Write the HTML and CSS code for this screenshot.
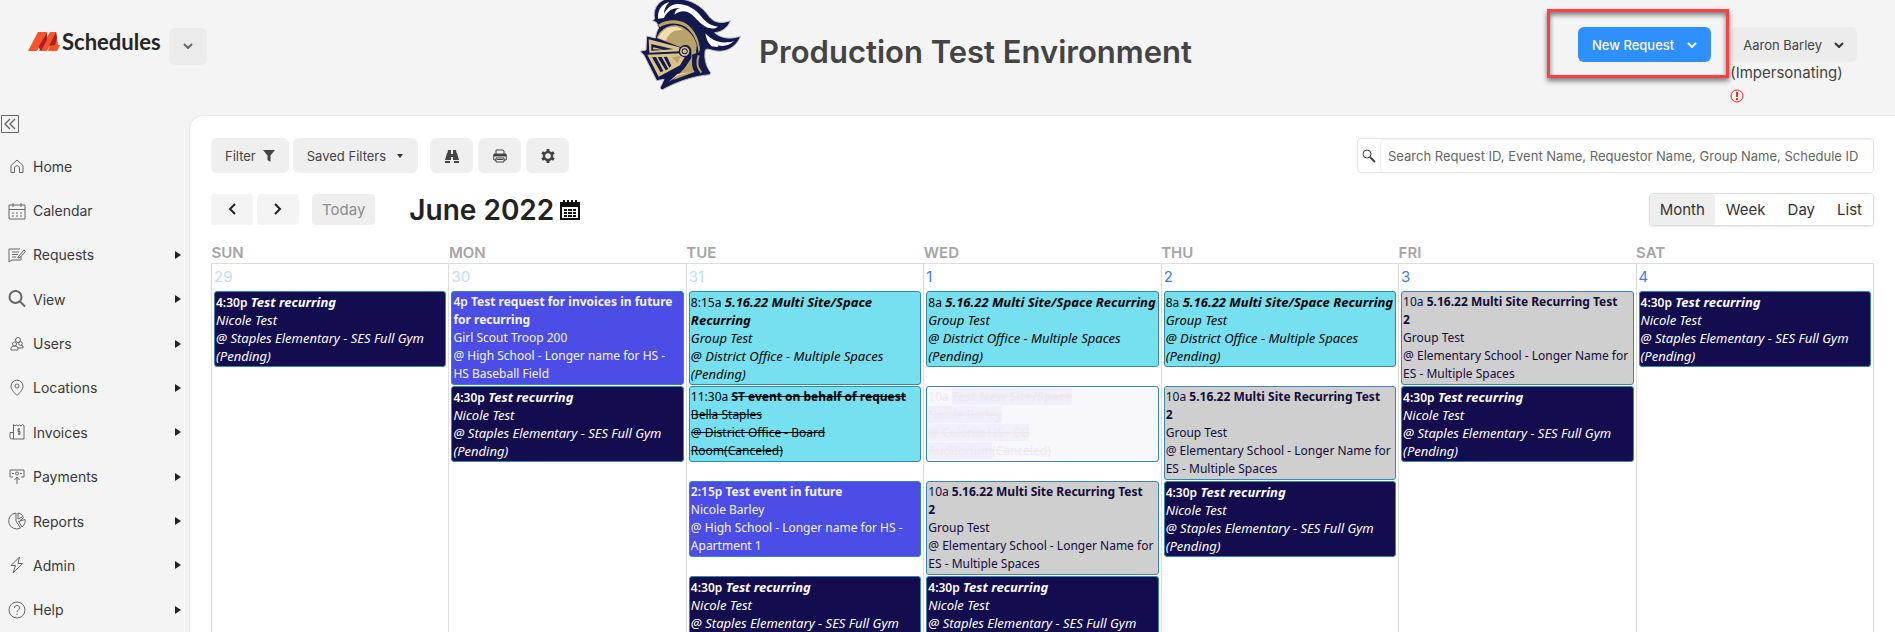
FILE: index.html
```html
<!DOCTYPE html>
<html lang="en">
<head>
    <meta charset="UTF-8">
    <meta name="viewport" content="width=device-width, initial-scale=1.0">
    <title>Schedules</title>
    <link rel="stylesheet" href="styles.css">
</head>
<body>

<header class="header">
    <div class="brand">
        <svg class="brand-mark" viewBox="0 0 32 19" aria-hidden="true">
            <path fill="#f4562a" d="M10 0h9L9 19H0zM22 0h6l2 13h2l-3 6h-9l2-6-3 6h-8z"/>
            <path fill="#b01e23" d="M19 0v8l-6 11-2-3V14zM28 0l1 6-2 7-6 1z"/>
        </svg>
        <span class="brand-name">Schedules</span>
        <button class="btn brand-menu" aria-label="Switch product">
            <svg width="10" height="6" viewBox="0 0 10 6"><path d="M1 1l4 4 4-4" fill="none" stroke="#666" stroke-width="2"/></svg>
        </button>
    </div>

    <div class="site-title">
        <svg class="knight" viewBox="0 0 330 282" aria-hidden="true">
            <path fill="#14194c" stroke="#c4c4c8" stroke-width="3" d="M62 68 50 62 56 56C50 32 62 6 92-4H130C165 0 196 18 214 42C226 60 242 76 284 62C274 84 258 96 236 98C254 114 282 120 314 108C302 140 272 158 240 153C226 151 214 144 208 150C204 172 208 196 224 218L222 224C180 228 132 240 78 270L72 264 84 238 62 242 44 206 30 178 24 166 12 154 30 150 32 108 58 114C60 100 64 90 68 84z"/>
            <path fill="#fff" d="M66 56C64 32 76 12 100 6C88 18 84 30 84 42C92 24 108 12 124 12C154 12 180 28 198 52C210 68 226 78 246 80C236 88 222 86 212 82C198 76 186 62 176 52C160 34 140 26 116 44C116 32 124 26 132 24C110 22 92 34 84 54z"/>
            <path fill="#fff" d="M208 100C228 122 254 134 294 124C278 138 262 140 246 136C252 142 238 142 226 138C216 130 210 116 208 100z"/>
            <path fill="#b9a36b" d="M66 74C92 58 128 56 152 72C176 88 190 120 192 148L188 160C186 128 172 96 148 80C124 68 96 66 72 82z"/>
            <path fill="#b9a36b" d="M62 114C70 92 94 76 116 76C144 76 176 104 182 136L180 160 168 164C170 184 164 196 176 216L112 240 146 204 166 174 166 150C162 134 146 130 134 142z"/>
            <path fill="#f0dfae" d="M66 114C74 94 94 80 114 80C130 80 136 86 140 90C112 88 96 102 90 122z"/>
            <path fill="#d9c487" d="M38 118 130 142 134 154 40 158z"/>
            <path fill="#14194c" d="M46 132 112 148 46 152z"/>
            <path fill="#d9c487" d="M52 142 84 149 50 148z"/>
            <path fill="#d9c487" d="M34 164 134 160 146 172 132 196 68 230z"/>
            <path fill="#14194c" d="M48 172 60 171 82 213 74 217zM65 172 77 171 97 207 89 211zM83 171 93 170 106 197 100 203z"/>
            <path fill="#b9a36b" d="M108 172 134 168 124 190z"/>
            <circle cx="146" cy="154" r="18" fill="#14194c"/>
            <circle cx="146" cy="154" r="14" fill="#d9c487"/>
            <circle cx="146" cy="154" r="9" fill="#14194c"/>
            <circle cx="146" cy="154" r="6" fill="#d9c487"/>
            <path fill="#f0dfae" d="M98 246 124 222 168 216 128 226z"/>
            <path fill="none" stroke="#b9a36b" stroke-width="6" d="M188 166C180 188 184 204 196 218"/>
        </svg>
        <h1>Production Test Environment</h1>
    </div>

    <div class="account">
        <button class="btn btn-primary">New Request
            <svg width="10" height="6" viewBox="0 0 10 6"><path d="M1 1l4 4 4-4" fill="none" stroke="#fff" stroke-width="2"/></svg>
        </button>
        <div class="user">
            <button class="btn btn-user">Aaron Barley
                <svg width="10" height="6" viewBox="0 0 10 6"><path d="M1 1l4 4 4-4" fill="none" stroke="#333" stroke-width="2"/></svg>
            </button>
            <span class="impersonating">(Impersonating)</span>
            <svg class="alert" viewBox="0 0 14 14"><circle cx="7" cy="7" r="6" fill="none" stroke="#f22"/><path d="M7 3v5M7 9v2" stroke="#f22" stroke-width="2"/></svg>
        </div>
        <div class="callout"></div>
    </div>
</header>

<div class="layout">
    <aside class="sidebar">
        <button class="collapse" aria-label="Collapse menu">
            <svg width="18" height="18" viewBox="0 0 18 18" fill="none" stroke="#666"><path d="M.5.5h17v17H.5z"/><path stroke-width="1.4" d="M9 4 4 9l5 5M14 4 9 9l5 5"/></svg>
        </button>
        <nav class="menu">
            <a href="#"><svg viewBox="0 0 18 18"><path d="M3 8.500 9 3l6 5.500V15.500h-3.500V11c0-3-5-3-5 0v4.500H3z"/></svg>Home</a>
            <a href="#"><svg viewBox="0 0 18 18"><path d="M1 3h16v14H1zM1 7.500h16M5 1v4M13 1v4"/><path stroke-dasharray="2 2" d="M4 11h10M4 14h10"/></svg>Calendar</a>
            <a href="#" class="has-sub"><svg viewBox="0 0 18 18"><path d="M12 3H1v13l3-2h9v-4M4 6h7M4 8.500h6M4 11h4"/><path d="M10 11 16 4l1.500 1.500L12 11.500l-2 .5z"/></svg>Requests</a>
            <a href="#" class="has-sub"><svg viewBox="0 0 18 18" class="bold"><circle cx="7.500" cy="7" r="6"/><path d="M12 11.500l5 5"/></svg>View</a>
            <a href="#" class="has-sub"><svg viewBox="0 0 18 18"><circle cx="10" cy="5" r="2.500"/><circle cx="6.500" cy="9" r="2"/><circle cx="12.500" cy="8.500" r="1.800"/><path d="M3 15v-2.500l2-1.500h3l2 1.500V15zM10 13h5v-2l-2-1"/></svg>Users</a>
            <a href="#" class="has-sub"><svg viewBox="0 0 18 18"><path d="M9 16.500C5 12.500 3 10 3 7.200a6 6 0 0 1 12 0C15 10 13 12.500 9 16.500z"/><circle cx="9" cy="7" r="2"/></svg>Locations</a>
            <a href="#" class="has-sub"><svg viewBox="0 0 18 18"><path d="M5.500 16V1.500L7 3l1.500-1L10 3l1.500-1L13 3l1.500-1.500 1.500 1V16H3.500c-2 0-1.500-2-1.500-6.500h3.500M12 6h-2v2.500h2V11h-2M11 5v7"/></svg>Invoices</a>
            <a href="#" class="has-sub"><svg viewBox="0 0 18 18"><path d="M5 9H2V2h14v7h-3M4 5.500h2M12 5.500h2M9 16V9M6.500 12 9 9l2.500 3"/><circle cx="9" cy="5.500" r="1.500"/></svg>Payments</a>
            <a href="#" class="has-sub"><svg viewBox="0 0 18 18"><path d="M8 1a8 8 0 1 0 4.500 15L8 9zM10 1v6l5-2.500C14 2.500 12.500 1.200 10 1zM10.500 9.500l6.500-2c.5 3-.5 5.500-3 7.500zM12 8.500l4-3"/></svg>Reports</a>
            <a href="#" class="has-sub"><svg viewBox="0 0 18 18"><path d="M11.500 1 3 9.500h4.500L5 17l9.500-9.500H10z"/></svg>Admin</a>
            <a href="#" class="has-sub"><svg viewBox="0 0 18 18"><circle cx="9" cy="9" r="8"/><path d="M6.500 7c0-3.500 5-3.500 5 0 0 2-2.500 2-2.500 4M9 12.500v1.500"/></svg>Help</a>
        </nav>
    </aside>

    <main class="panel">
        <div class="toolbar">
            <button class="btn">Filter
                <svg width="12" height="12" viewBox="0 0 12 12"><path fill="#444" d="M0 0h12L7.500 5.500V12l-3-2V5.500z"/></svg>
            </button>
            <button class="btn">Saved Filters
                <svg class="caret" width="6" height="4" viewBox="0 0 6 4"><path fill="#333" d="M0 0h6L3 4z"/></svg>
            </button>
            <div class="icon-group">
                <button class="btn btn-icon" aria-label="Find">
                    <svg width="14" height="14" viewBox="0 0 14 14" fill="#444"><path d="M3 1h3v3H2.500zM8 1h3l.5 3H8zM2 4h4v7H0zM8 4h4l2 7H8zM6 5h2v3H6zM0 12h5v2H0zM9 12h5v2H9z"/></svg>
                </button>
                <button class="btn btn-icon" aria-label="Print">
                    <svg width="14" height="14" viewBox="0 0 14 14" fill="none" stroke="#444"><path d="M3 5V1h7l1 1v3M3 9h8v4H3z"/><path fill="#444" d="M1 5h12v2H1z"/><path d="M3 11H.8V6h12.400v5H11M4 10.500h6"/></svg>
                </button>
                <button class="btn btn-icon" aria-label="Settings">
                    <svg width="14" height="14" viewBox="0 0 14 14"><circle cx="7" cy="7" r="4" fill="none" stroke="#444" stroke-width="2.500"/><path stroke="#444" stroke-width="3" d="M7 0v3M7 11v3M1 3.500l2.500 1.500M10.500 9l2.500 1.500M1 10.500 3.500 9M10.500 5 13 3.500"/></svg>
                </button>
            </div>
            <form class="search">
                <label for="search" aria-label="Search">
                    <svg width="14" height="14" viewBox="0 0 14 14" fill="none" stroke="#444"><circle cx="5" cy="5" r="4"/><path stroke-width="2" d="M8 8l5 5"/></svg>
                </label>
                <input type="text" id="search" placeholder="Search Request ID, Event Name, Requestor Name, Group Name, Schedule ID">
            </form>
        </div>

        <div class="cal-nav">
            <button class="step" aria-label="Previous month"><svg width="8" height="12" viewBox="0 0 8 12"><path d="M7 1 2 6l5 5" fill="none" stroke="#222" stroke-width="2"/></svg></button>
            <button class="step" aria-label="Next month"><svg width="8" height="12" viewBox="0 0 8 12"><path d="M1 1l5 5-5 5" fill="none" stroke="#222" stroke-width="2"/></svg></button>
            <button class="today" disabled>Today</button>
            <h2>June 2022</h2>
            <svg width="20" height="20" viewBox="0 0 20 20"><path d="M1 3h18v16H1z" fill="#fff" stroke="#111" stroke-width="2"/><path fill="#111" d="M0 2h20v5H0zM3 0h2v3H3zM7 0h2v3H7zM11 0h2v3h-2zM15 0h2v3h-2zM4 9h3v2H4zM8 9h4v2H8zM13 9h3v2h-3zM4 12h3v2H4zM8 12h4v2H8zM13 12h3v2h-3zM4 15h3v2H4zM8 15h4v2H8zM13 15h3v2h-3z"/></svg>
            <div class="views">
                <button class="active">Month</button>
                <button>Week</button>
                <button>Day</button>
                <button>List</button>
            </div>
        </div>

        <table class="calendar">
            <thead>
                <tr><th>SUN</th><th>MON</th><th>TUE</th><th>WED</th><th>THU</th><th>FRI</th><th>SAT</th></tr>
            </thead>
            <tbody>
                <tr>
                    <td class="other">
                        <span class="day">29</span>
                        <div class="events">
                            <div class="event navy pending"><span class="time">4:30p</span> <b>Test recurring</b><br>Nicole Test<br>@ Staples Elementary - SES Full Gym<br>(Pending)</div>
                        </div>
                    </td>
                    <td class="other">
                        <span class="day">30</span>
                        <div class="events">
                            <div class="event indigo"><span class="time">4p</span> <b>Test request for invoices in future<br>for recurring</b><br>Girl Scout Troop 200<br>@ High School - Longer name for HS -<br>HS Baseball Field</div>
                            <div class="event navy pending"><span class="time">4:30p</span> <b>Test recurring</b><br>Nicole Test<br>@ Staples Elementary - SES Full Gym<br>(Pending)</div>
                        </div>
                    </td>
                    <td class="other">
                        <span class="day">31</span>
                        <div class="events">
                            <div class="event cyan pending"><span class="time">8:15a</span> <b>5.16.22 Multi Site/Space<br>Recurring</b><br>Group Test<br>@ District Office - Multiple Spaces<br>(Pending)</div>
                            <div class="event cyan"><span class="time">11:30a</span> <s><b>ST event on behalf of request</b><br>Bella Staples<br>@ District Office - Board<br>Room(Canceled)</s></div>
                            <div class="event indigo"><span class="time">2:15p</span> <b>Test event in future</b><br>Nicole Barley<br>@ High School - Longer name for HS -<br>Apartment 1</div>
                            <div class="event navy pending"><span class="time">4:30p</span> <b>Test recurring</b><br>Nicole Test<br>@ Staples Elementary - SES Full Gym<br>(Pending)</div>
                        </div>
                    </td>
                    <td>
                        <span class="day">1</span>
                        <div class="events">
                            <div class="event cyan pending"><span class="time">8a</span> <b>5.16.22 Multi Site/Space Recurring</b><br>Group Test<br>@ District Office - Multiple Spaces<br>(Pending)</div>
                            <div class="event faded"><span class="time">10a</span> <s><mark><b>Test New Site/Space</b><br>Nicole Barley<br>@ Colonie HS - CG<br>Auditorium</mark>(Canceled)</s></div>
                            <div class="event grey"><span class="time">10a</span> <b>5.16.22 Multi Site Recurring Test<br>2</b><br>Group Test<br>@ Elementary School - Longer Name for<br>ES - Multiple Spaces</div>
                            <div class="event navy pending"><span class="time">4:30p</span> <b>Test recurring</b><br>Nicole Test<br>@ Staples Elementary - SES Full Gym<br>(Pending)</div>
                        </div>
                    </td>
                    <td>
                        <span class="day">2</span>
                        <div class="events">
                            <div class="event cyan pending"><span class="time">8a</span> <b>5.16.22 Multi Site/Space Recurring</b><br>Group Test<br>@ District Office - Multiple Spaces<br>(Pending)</div>
                            <div class="event grey"><span class="time">10a</span> <b>5.16.22 Multi Site Recurring Test<br>2</b><br>Group Test<br>@ Elementary School - Longer Name for<br>ES - Multiple Spaces</div>
                            <div class="event navy pending"><span class="time">4:30p</span> <b>Test recurring</b><br>Nicole Test<br>@ Staples Elementary - SES Full Gym<br>(Pending)</div>
                        </div>
                    </td>
                    <td>
                        <span class="day">3</span>
                        <div class="events">
                            <div class="event grey"><span class="time">10a</span> <b>5.16.22 Multi Site Recurring Test<br>2</b><br>Group Test<br>@ Elementary School - Longer Name for<br>ES - Multiple Spaces</div>
                            <div class="event navy pending"><span class="time">4:30p</span> <b>Test recurring</b><br>Nicole Test<br>@ Staples Elementary - SES Full Gym<br>(Pending)</div>
                        </div>
                    </td>
                    <td>
                        <span class="day">4</span>
                        <div class="events">
                            <div class="event navy pending"><span class="time">4:30p</span> <b>Test recurring</b><br>Nicole Test<br>@ Staples Elementary - SES Full Gym<br>(Pending)</div>
                        </div>
                    </td>
                </tr>
            </tbody>
        </table>
    </main>
</div>

</body>
</html>
```

FILE: styles.css
```css
* {
    box-sizing: border-box;
}

body {
    font-family: Inter, "Liberation Sans", sans-serif;
    margin: 0;
    height: 100vh;
    display: flex;
    flex-direction: column;
    overflow: hidden;
    background-color: #f4f4f4;
    color: #444;
}

button {
    font-family: inherit;
    border: none;
    cursor: pointer;
}

h1, h2 {
    margin: 0;
    font-weight: 600;
}

.btn {
    display: inline-flex;
    align-items: center;
    justify-content: center;
    height: 35px;
    padding: 0 14px;
    border-radius: 6px;
    background-color: #efefef;
    color: #444;
    font-size: 13px;
}

/* header */
.header {
    display: grid;
    grid-template-columns: 19fr auto 21fr;
    height: 115px;
    flex: none;
}

.brand {
    display: flex;
    align-items: center;
    height: 38px;
    margin-top: 27px;
    padding-left: 28px;
}

.brand-mark {
    width: 32px;
    height: 19px;
    margin-top: -10px;
}

.brand-name {
    margin: -10px 8px 0 2px;
    font-family: Lato, sans-serif;
    font-size: 22px;
    font-weight: 700;
    color: #262626;
}

.brand-menu {
    width: 38px;
    height: 37px;
    padding: 0;
    background-color: #ebebeb;
}

.site-title {
    display: flex;
    align-items: flex-start;
    gap: 13px;
}

.knight {
    width: 110px;
    height: 94px;
}

.site-title h1 {
    font-size: 31px;
    line-height: 36px;
    margin-top: 34px;
    white-space: nowrap;
}

.account {
    position: relative;
    display: flex;
    justify-content: flex-end;
    align-items: flex-start;
    gap: 19px;
    padding: 27px 38px 0 0;
}

.btn-primary {
    gap: 13px;
    background-color: #2e8fff;
    color: white;
    font-weight: 500;
}

.user {
    display: flex;
    flex-direction: column;
    align-items: flex-start;
}

.btn-user {
    gap: 12px;
    padding: 0 13px;
    background-color: #ececec;
}

.impersonating {
    font-size: 15px;
    line-height: 22px;
}

.alert {
    width: 14px;
    height: 14px;
    margin-top: 5px;
}

/* red frame over the new request button */
.callout {
    position: absolute;
    top: 9px;
    right: 166px;
    width: 182px;
    height: 69px;
    border: 3px solid #ff4040;
    box-shadow: 0 3px 5px rgba(0, 0, 0, 0.5), inset 0 3px 5px rgba(0, 0, 0, 0.5);
    pointer-events: none;
}

/* sidebar */
.layout {
    display: flex;
    flex: 1;
    min-height: 0;
}

.sidebar {
    display: flex;
    flex-direction: column;
    width: 189px;
    flex: none;
}

.collapse {
    display: flex;
    padding: 0;
    margin: 0 1px 11px;
    width: 18px;
    background: none;
}

.menu {
    display: flex;
    flex-direction: column;
    flex: 1;
}

.menu a {
    display: flex;
    align-items: center;
    flex: 1;
    gap: 7px;
    padding: 0 8px;
    font-size: 14px;
    color: #3a3a3a;
    text-decoration: none;
}

.menu svg {
    width: 18px;
    height: 18px;
    fill: none;
    stroke: #666;
    stroke-width: 1;
}

.menu svg.bold {
    stroke-width: 2;
}

.has-sub::after {
    content: "";
    margin-left: auto;
    border-left: 6px solid #222;
    border-top: 4px solid transparent;
    border-bottom: 4px solid transparent;
}

/* main panel */
.panel {
    flex: 1;
    min-width: 0;
    padding: 22px 21px 0;
    background-color: white;
    border-top: 1px solid #e6e6e6;
    border-left: 1px solid #e6e6e6;
    border-top-left-radius: 14px;
    overflow: hidden;
}

.toolbar {
    display: flex;
    gap: 4px;
}

.toolbar .btn {
    gap: 7px;
}

.toolbar .caret {
    margin: 0 1px 0 4px;
}

.icon-group {
    display: flex;
    gap: 5px;
    margin-left: 8px;
}

.btn-icon {
    width: 43px;
    padding: 0;
}

.search {
    display: flex;
    width: 517px;
    height: 35px;
    margin-left: auto;
    border: 1px solid #e4e4e4;
    border-radius: 4px;
}

.search label {
    display: flex;
    align-items: center;
    padding: 0 4px;
}

.search input {
    flex: 1;
    min-width: 0;
    padding: 0 7px;
    border: 1px solid #f2f2f2;
    border-width: 1px 0 0 1px;
    border-radius: 4px;
    font-family: inherit;
    font-size: 13px;
}

.search input::placeholder {
    color: #666;
}

.cal-nav {
    display: flex;
    align-items: center;
    height: 33px;
    margin-top: 20px;
}

.cal-nav h2 {
    margin: 0 6px 0 34px;
    font-size: 28px;
    line-height: 32px;
    color: #222;
}

.step {
    width: 42px;
    height: 31px;
    margin-right: 4px;
    border-radius: 4px;
    background-color: #f4f4f4;
}

.today {
    height: 31px;
    margin-left: 9px;
    padding: 0 10px;
    border-radius: 4px;
    background-color: #eee;
    color: #8c8c8c;
    font-size: 15px;
}

.views {
    display: flex;
    height: 33px;
    margin-left: auto;
    border: 1px solid #ddd;
    border-radius: 4px;
    box-shadow: 0 1px 2px rgba(0, 0, 0, 0.1);
}

.views button {
    padding: 0 11px;
    border-radius: 3px;
    background-color: white;
    color: #333;
    font-size: 15px;
}

.views .active {
    padding: 0 10px;
    background-color: #eee;
}

/* month grid */
.calendar {
    width: 100%;
    margin-top: 17px;
    border-collapse: collapse;
    table-layout: fixed;
}

.calendar th {
    padding: 0;
    height: 20px;
    font-size: 15px;
    line-height: 20px;
    font-weight: 600;
    text-align: left;
    color: #a5a5a5;
}

.calendar td {
    height: 480px;
    padding: 2px 2px 0;
    border: 1px solid #ddd;
    vertical-align: top;
}

.day {
    display: block;
    height: 25px;
    font-size: 15px;
    line-height: 22px;
    color: #3f7fe0;
}

.other .day {
    color: #c5dcf8;
}

.events {
    display: grid;
    grid-auto-rows: 94px;
    gap: 1px;
    align-items: start;
}

.event {
    padding: 1px;
    border: 1px solid #3788ad;
    border-radius: 3px;
    font-family: "Noto Sans", "Open Sans", sans-serif;
    font-size: 12px;
    line-height: 18px;
    white-space: nowrap;
}

.event b {
    font-weight: 700;
}

.pending {
    font-style: italic;
    font-size: 13px;
}

.event .time {
    font-style: normal;
    font-size: 12px;
    line-height: 1;
}

.navy {
    background-color: #130c4e;
    color: white;
}

.indigo {
    background-color: #4b4de6;
    color: #f4f4ff;
}

.navy .time, .indigo .time {
    font-weight: 600;
}

.cyan {
    background-color: #76e0f0;
    color: #000;
}

.grey {
    background-color: #cfcfcf;
    color: #130c3c;
}

.faded {
    background-color: #f7f7fc;
    color: #efe8ef;
}

.faded mark {
    background-color: #f1f0f8;
    color: inherit;
}
```
